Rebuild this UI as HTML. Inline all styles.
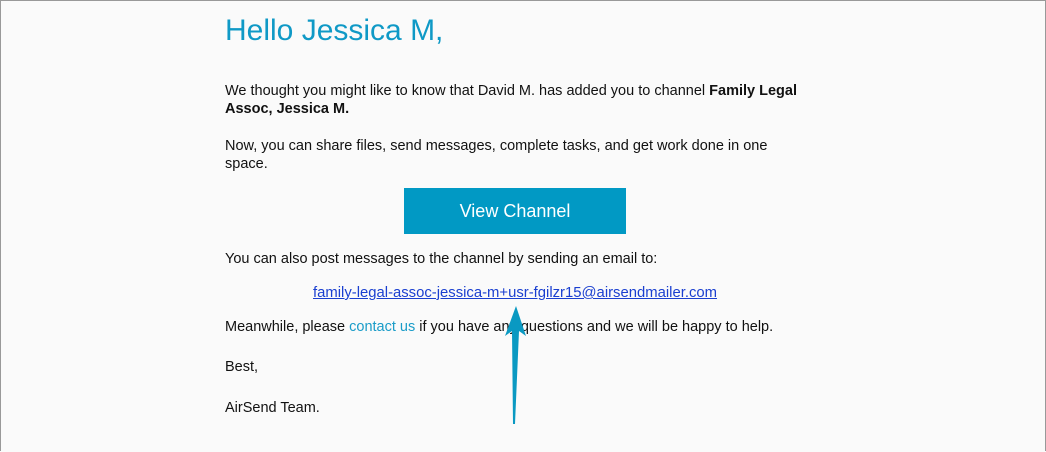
<!DOCTYPE html>
<html><head><style>
html,body{margin:0;padding:0}
body{width:1046px;height:452px;position:relative;background:#fafafa;font-family:"Liberation Sans",sans-serif;color:#111;overflow:hidden}
.frame{position:absolute;left:0;top:0;width:1044px;height:450px;border:1px solid #999;border-bottom:none}
.t{position:absolute;left:225px;font-size:14.5px;line-height:18px;white-space:nowrap}
h1{position:absolute;left:225px;top:13px;margin:0;font-weight:normal;font-size:30px;color:#0f99c6;line-height:36px}
.btn{position:absolute;left:404px;top:188px;width:222px;height:46px;background:#0199c4;color:#fff;font-size:18px;line-height:46px;text-align:center}
a{color:#1a3fd0;text-decoration:underline}
.c{color:#1a9cc8}
</style></head><body>
<div class="frame"></div>
<h1>Hello Jessica M,</h1>
<div class="t" style="top:82px">We thought you might like to know that David M. has added you to channel <b>Family Legal</b><br><b>Assoc, Jessica M.</b></div>
<div class="t" style="top:137px">Now, you can share files, send messages, complete tasks, and get work done in one<br>space.</div>
<div class="btn">View Channel</div>
<div class="t" style="top:250px">You can also post messages to the channel by sending an email to:</div>
<div class="t" style="top:284px;left:313px;font-size:14.85px"><a>family-legal-assoc-jessica-m+usr-fgilzr15@airsendmailer.com</a></div>
<div class="t" style="top:318px">Meanwhile, please <span class="c">contact us</span> if you have any questions and we will be happy to help.</div>
<div class="t" style="top:358px">Best,</div>
<div class="t" style="top:399px">AirSend Team.</div>
<svg style="position:absolute;left:0;top:0" width="1046" height="452"><polygon points="516,306 526,336 519,331 515,424 513,424 512,331 505,336" fill="#0a99c2"/></svg>
</body></html>
